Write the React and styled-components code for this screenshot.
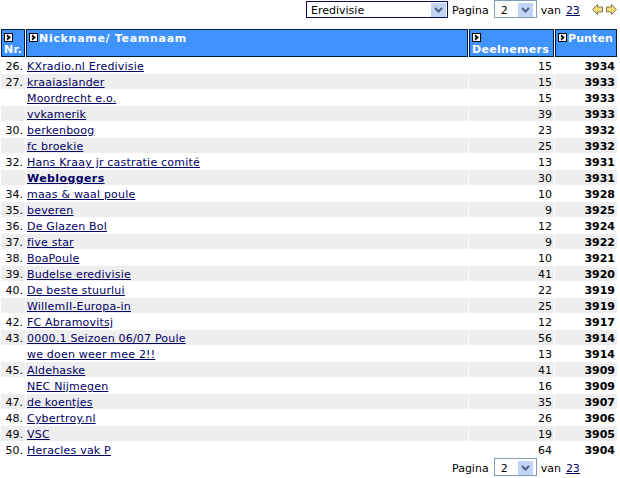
import React from "react";
import styled, { createGlobalStyle } from "styled-components";

const rows = [
  ["26.", "KXradio.nl Eredivisie", 15, 3934],
  ["27.", "kraaiaslander", 15, 3933],
  ["", "Moordrecht e.o.", 15, 3933],
  ["", "vvkamerik", 39, 3933],
  ["30.", "berkenboog", 23, 3932],
  ["", "fc broekie", 25, 3932],
  ["32.", "Hans Kraay jr castratie comité", 13, 3931],
  ["", "Webloggers", 30, 3931, true],
  ["34.", "maas & waal poule", 10, 3928],
  ["35.", "beveren", 9, 3925],
  ["36.", "De Glazen Bol", 12, 3924],
  ["37.", "five star", 9, 3922],
  ["38.", "BoaPoule", 10, 3921],
  ["39.", "Budelse eredivisie", 41, 3920],
  ["40.", "De beste stuurlui", 22, 3919],
  ["", "WillemII-Europa-in", 25, 3919],
  ["42.", "FC Abramovitsj", 12, 3917],
  ["43.", "0000.1 Seizoen 06/07 Poule", 56, 3914],
  ["", "we doen weer mee 2!!", 13, 3914],
  ["45.", "Aldehaske", 41, 3909],
  ["", "NEC Nijmegen", 16, 3909],
  ["47.", "de koentjes", 35, 3907],
  ["48.", "Cybertroy.nl", 26, 3906],
  ["49.", "VSC", 19, 3905],
  ["50.", "Heracles vak P", 64, 3904],
];

const SortIcon = () => (
  <SortBox viewBox="0 0 9 9" width="9" height="9">
    <rect width="9" height="9" fill="#fff" />
    <rect x="0.5" y="0.5" width="8" height="8" fill="none" stroke="#000" />
    <path d="M3 2 L6 4.5 L3 7 M3 3 L5 4.5 L3 6" fill="none" stroke="#000" strokeWidth="1.1" />
  </SortBox>
);

const Arrow = ({ flip }) => (
  <ArrowSvg viewBox="0 0 11 11" width="11" height="11" $flip={flip}>
    <path d="M0.5 5.5 L5.5 0.5 V3 H10.5 V8 H5.5 V10.5 Z" fill="#f3dc7c" stroke="#857a4a" strokeWidth="1" />
  </ArrowSvg>
);

const Chevron = () => (
  <ChevronBox>
    <svg viewBox="0 0 9 6" width="9" height="6">
      <path d="M1 1 L4.5 4.5 L8 1" fill="none" stroke="#4d6185" strokeWidth="2" />
    </svg>
  </ChevronBox>
);

const Pager = ({ withArrows }) => (
  <>
    <PagerLabel>Pagina</PagerLabel>
    <PageSelect>
      <SelectText>2</SelectText>
      <Chevron />
    </PageSelect>
    <PagerLabel>van</PagerLabel>
    <TableLink href="#">23</TableLink>
    {withArrows && (
      <Arrows>
        <Arrow />
        <Arrow flip />
      </Arrows>
    )}
  </>
);

export default function App() {
  return (
    <Page>
      <GlobalStyle />
      <TopBar>
        <LeagueSelect>
          <SelectText>Eredivisie</SelectText>
          <Chevron />
        </LeagueSelect>
        <Pager withArrows />
      </TopBar>
      <Table>
        <colgroup>
          <col width="24" />
          <col width="442" />
          <col width="85" />
          <col width="62" />
        </colgroup>
        <thead>
          <tr>
            <HeadCell $track={0.4}><SortIcon /><br />Nr.</HeadCell>
            <HeadCell $track={0.7}><SortIcon />Nickname/ Teamnaam</HeadCell>
            <HeadCell $track={0.3}><SortIcon /><br />Deelnemers</HeadCell>
            <HeadCell $track={0.1}><SortIcon />Punten</HeadCell>
          </tr>
        </thead>
        <tbody>
          {rows.map(([nr, name, count, points, bold], i) => (
            <Row key={name} $odd={i % 2 === 1}>
              <NumCell>{nr}</NumCell>
              <NameCell><TableLink href="#" $bold={bold}>{name}</TableLink></NameCell>
              <NumCell>{count}</NumCell>
              <PointsCell>{points}</PointsCell>
            </Row>
          ))}
        </tbody>
      </Table>
      <BottomBar>
        <Pager />
      </BottomBar>
    </Page>
  );
}

const GlobalStyle = createGlobalStyle`
  html, body {
    margin: 0;
    padding: 0;
    background: #fff;
  }
`;

const Page = styled.div`
  width: 620px;
  height: 478px;
  overflow: hidden;
  font-family: "DejaVu Sans", Verdana, sans-serif;
  font-size: 11px;
  color: #000;
`;

const TopBar = styled.div`
  height: 28px;
  display: flex;
  align-items: flex-start;
  padding: 0 0 0 306px;
  box-sizing: border-box;
`;

const BottomBar = styled.div`
  display: flex;
  align-items: flex-start;
  padding: 0 0 0 452px;
`;

const LeagueSelect = styled.div`
  width: 142px;
  height: 17px;
  margin: 1px 4px 0 0;
  box-sizing: border-box;
  border: 1px solid #0a0a5a;
  display: flex;
  align-items: center;
  justify-content: space-between;
  padding: 0 1px 0 4px;
`;

const PageSelect = styled.div`
  width: 43px;
  height: 18px;
  box-sizing: border-box;
  border: 1px solid #7f9db9;
  display: flex;
  align-items: center;
  justify-content: space-between;
  padding: 1px 3px 0 6px;
  margin: 0 4px 0 5px;
`;

const SelectText = styled.span`
  line-height: 14px;
  padding-top: 2px;
`;

const ChevronBox = styled.div`
  width: 15px;
  height: 14px;
  background: #c3d3f5;
  display: flex;
  align-items: center;
  justify-content: center;
`;

const PagerLabel = styled.span`
  line-height: 22px;
`;

const Arrows = styled.div`
  display: flex;
  gap: 3px;
  margin-left: 12px;
  padding-top: 4px;
`;

const ArrowSvg = styled.svg`
  display: block;
  transform: ${(p) => (p.$flip ? "scaleX(-1)" : "none")};
`;

const TableLink = styled.a`
  color: #000066;
  line-height: 22px;
  margin-left: 5px;
  font-weight: ${(p) => (p.$bold ? 700 : 400)};
  td & {
    margin-left: 0;
    line-height: 13px;
    letter-spacing: ${(p) => (p.$bold ? 0.4 : 0.2)}px;
  }
`;

const Table = styled.table`
  table-layout: fixed;
  width: 618px;
  border-collapse: separate;
  border-spacing: 1px;
  margin: 0;
`;

const HeadCell = styled.th`
  background: #3f93ff;
  border: 1px solid #001a40;
  box-sizing: border-box;
  height: 28px;
  padding: 3px 1px 0 2px;
  color: #fff;
  font-weight: 700;
  font-size: 11px;
  line-height: 11px;
  letter-spacing: ${(p) => p.$track}px;
  text-align: left;
  vertical-align: top;
  white-space: nowrap;
`;

const SortBox = styled.svg`
  display: inline-block;
  margin-right: 1px;
`;

const Row = styled.tr`
  td {
    background: ${(p) => (p.$odd ? "#eeeeee" : "#ffffff")};
  }
`;

const NumCell = styled.td`
  height: 13px;
  padding: 2px 2px 0;
  line-height: 13px;
  text-align: right;
  white-space: nowrap;
`;

const NameCell = styled.td`
  height: 13px;
  padding: 2px 1px 0;
  line-height: 13px;
  white-space: nowrap;
`;

const PointsCell = styled(NumCell)`
  font-weight: 700;
`;
